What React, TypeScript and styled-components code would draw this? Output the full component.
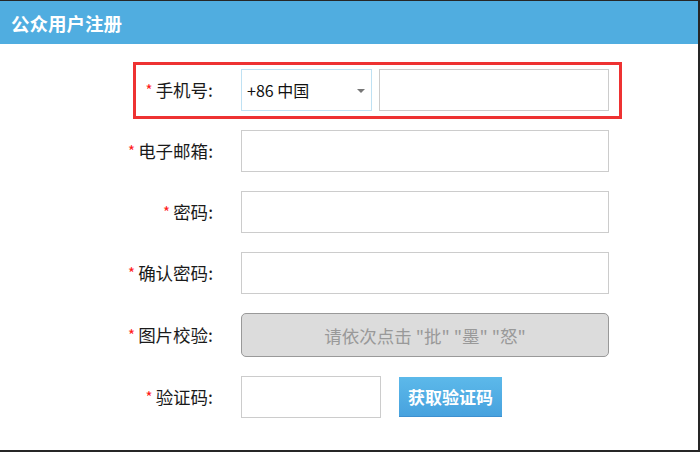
import React from "react";
import styled, { createGlobalStyle } from "styled-components";

const Global = createGlobalStyle`
  html, body { margin: 0; padding: 0; background: #fff; }
  body { font-family: "Noto Sans CJK SC", "Noto Sans", "Liberation Sans", sans-serif; }
  * { box-sizing: border-box; }
`;

const Frame = styled.div`
  width: 700px;
  height: 452px;
  border-top: 1px solid #262626;
  border-right: 2px solid #262626;
  border-bottom: 2px solid #262626;
  background: #fff;
  display: flex;
  flex-direction: column;
`;

const Header = styled.div`
  height: 43px;
  background: #50ade0;
  color: #fff;
  font-size: 18.5px;
  font-weight: 700;
  display: flex;
  align-items: center;
  padding-left: 11px;
`;

const Form = styled.div`
  display: flex;
  flex-direction: column;
  padding-top: 18px;
`;

const Highlight = styled.div`
  margin-left: 133px;
  width: 489px;
  border: 3px solid #ee3232;
  padding: 4px 10px 5px 0;
  margin-bottom: 11px;
`;

const Row = styled.div<{ $gap?: number }>`
  display: flex;
  align-items: center;
  margin-bottom: ${(p) => p.$gap ?? 19}px;
`;

const Label = styled.div<{ $w: number }>`
  width: ${(p) => p.$w}px;
  flex: none;
  text-align: right;
  padding-right: 28px;
  font-size: 17.5px;
  color: #1a1a1a;
  white-space: nowrap;
  line-height: 20px;
`;

const Star = styled.span`
  color: #ff1a1a;
  font-size: 15px;
  margin-right: 3px;
  position: relative;
  top: -1px;
`;

const Input = styled.input<{ $w: number }>`
  width: ${(p) => p.$w}px;
  height: 42px;
  border: 1px solid #cccccc;
  background: #fff;
  outline: none;
  padding: 0 8px;
  font-size: 15px;
  font-family: inherit;
`;

const Select = styled.div`
  width: 131px;
  height: 42px;
  border: 1px solid #bfe1f3;
  display: flex;
  align-items: center;
  justify-content: space-between;
  padding: 0 6px 0 5px;
  font-size: 16px;
  color: #111;
  margin-right: 7px;
`;

const Arrow = styled.span`
  width: 0;
  height: 0;
  border-left: 4px solid transparent;
  border-right: 4px solid transparent;
  border-top: 4px solid #777;
  margin-top: 1px;
`;

const Captcha = styled.div`
  width: 368px;
  height: 44px;
  border: 1px solid #999;
  border-radius: 5px;
  background: #dcdcdc;
  color: #999;
  font-size: 17.5px;
  display: flex;
  align-items: center;
  justify-content: center;
`;

const CodeButton = styled.button`
  width: 103px;
  height: 40px;
  margin-left: 18px;
  border: none;
  border-bottom: 1px solid #3d8fcf;
  background: linear-gradient(#5cb9ea, #48a2de);
  color: #fff;
  font-size: 17px;
  font-weight: 700;
  font-family: inherit;
  padding: 0;
  cursor: pointer;
`;

const fields: { label: string }[] = [
  { label: "电子邮箱" },
  { label: "密码" },
  { label: "确认密码" },
];

export default function App() {
  return (
    <>
      <Global />
      <Frame>
        <Header>公众用户注册</Header>
        <Form>
          <Highlight>
            <Row $gap={0}>
              <Label $w={105}>
                <Star>*</Star>手机号:
              </Label>
              <Select>
                <span>+86 中国</span>
                <Arrow />
              </Select>
              <Input $w={230} />
            </Row>
          </Highlight>
          {fields.map((f) => (
            <Row key={f.label}>
              <Label $w={241}>
                <Star>*</Star>
                {f.label}:
              </Label>
              <Input $w={368} />
            </Row>
          ))}
          <Row>
            <Label $w={241}>
              <Star>*</Star>图片校验:
            </Label>
            <Captcha>请依次点击 "批" "墨" "怒"</Captcha>
          </Row>
          <Row>
            <Label $w={241}>
              <Star>*</Star>验证码:
            </Label>
            <Input $w={140} />
            <CodeButton>获取验证码</CodeButton>
          </Row>
        </Form>
      </Frame>
    </>
  );
}
